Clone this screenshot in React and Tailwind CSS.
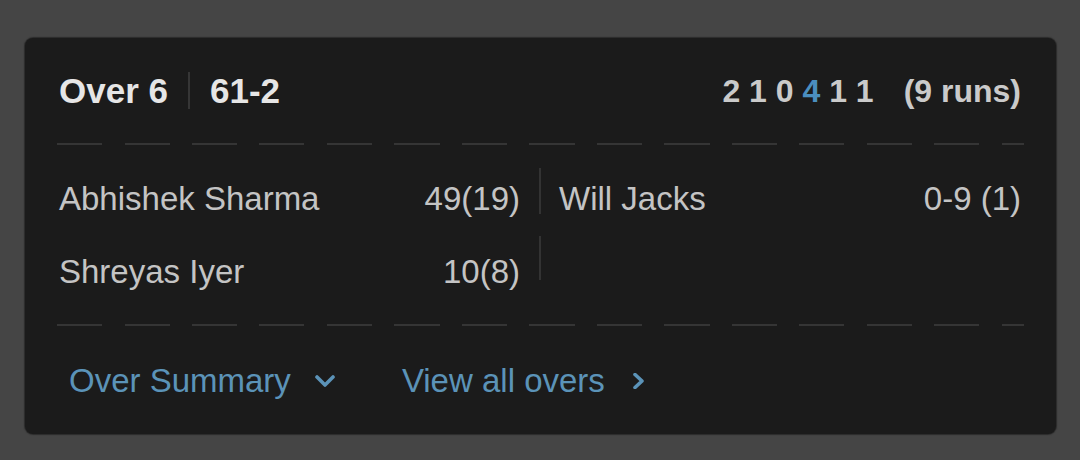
import React from "react";

const dash =
  "h-[2px] w-full bg-[repeating-linear-gradient(90deg,#353535_0px,#353535_45px,transparent_45px,transparent_67.5px)]";

function ChevronDown() {
  return (
    <svg width="20" height="14" viewBox="0 0 20 14" className="block">
      <polyline
        points="2,3 10,11 18,3"
        fill="none"
        stroke="#5b93b8"
        strokeWidth="3.6"
        strokeLinecap="round"
        strokeLinejoin="round"
      />
    </svg>
  );
}

function ChevronRight() {
  return (
    <svg width="14" height="16" viewBox="0 0 14 16" className="block">
      <polyline
        points="3,1.5 10,8 3,14.5"
        fill="none"
        stroke="#5b93b8"
        strokeWidth="3.6"
        strokeLinecap="round"
        strokeLinejoin="round"
      />
    </svg>
  );
}

export default function App() {
  return (
    <div
      className="w-[1080px] h-[460px] bg-[#454545] overflow-hidden pt-[38px] pl-[25px]"
      style={{ fontFamily: '"Liberation Sans", Arial, sans-serif' }}
    >
      <div className="w-[1031px] h-[396px] bg-[#1b1b1b] rounded-[8px] shadow-[0_0_1px_1px_rgba(40,40,40,0.9)] px-[32px] flex flex-col">
        {/* Header */}
        <div className="h-[105px] flex items-center justify-between pl-[2px] pr-[3px]">
          <div className="flex items-center">
            <span className="text-[35px] leading-[35px] font-bold text-[#e6e6e6]">Over 6</span>
            <div className="w-[2px] h-[37px] bg-[#363636] mx-[20px]" />
            <span className="text-[35px] leading-[35px] font-bold text-[#e6e6e6]">61-2</span>
          </div>
          <div className="flex items-center text-[32px] leading-[32px] font-bold text-[#cacaca] whitespace-pre">
            <span>
              2 1 0 <span className="text-[#4b8fc0]">4</span> 1 1
            </span>
            <span className="ml-[30px]">(9 runs)</span>
          </div>
        </div>
        <div className={dash} />

        {/* Row 1 */}
        <div className="mt-[23px] h-[46px] flex text-[33px] leading-[33px] text-[#c4c4c4]">
          <div className="w-[482px] flex justify-between pl-[2px] pr-[19px] pt-[14px]">
            <span>Abhishek Sharma</span>
            <span>49(19)</span>
          </div>
          <div className="w-[2px] h-full bg-[#333333]" />
          <div className="flex-1 flex justify-between pl-[18px] pr-[3px] pt-[14px]">
            <span>Will Jacks</span>
            <span>0-9 (1)</span>
          </div>
        </div>

        {/* Row 2 */}
        <div className="mt-[22px] h-[44px] flex text-[33px] leading-[33px] text-[#c4c4c4]">
          <div className="w-[482px] flex justify-between pl-[2px] pr-[19px] pt-[19px]">
            <span>Shreyas Iyer</span>
            <span>10(8)</span>
          </div>
          <div className="w-[2px] h-full bg-[#333333]" />
          <div className="flex-1" />
        </div>

        <div className={`mt-[44px] ${dash}`} />

        {/* Footer links */}
        <div className="h-[108px] flex items-center pl-[12px] text-[33px] leading-[33px] text-[#5b93b8]">
          <span>Over Summary</span>
          <span className="ml-[24px] mt-[2px]">
            <ChevronDown />
          </span>
          <span className="ml-[67px]">View all overs</span>
          <span className="ml-[27px] mt-[2px]">
            <ChevronRight />
          </span>
        </div>
      </div>
    </div>
  );
}
